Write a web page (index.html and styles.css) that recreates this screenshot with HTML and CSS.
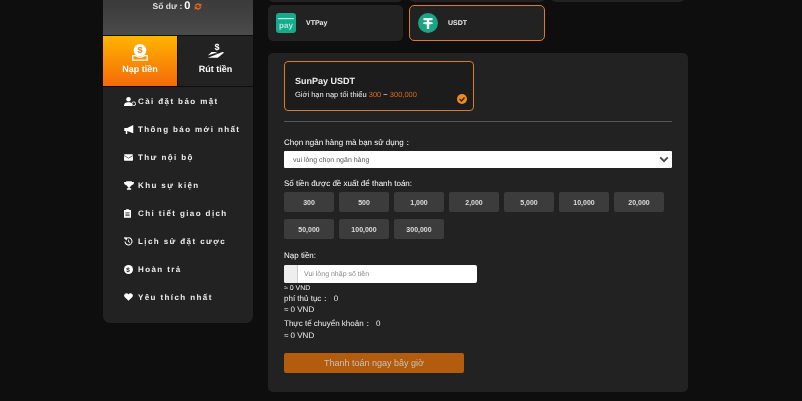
FILE: index.html
```html
<!DOCTYPE html>
<html lang="vi">
<head>
    <meta charset="UTF-8">
    <meta name="viewport" content="width=device-width, initial-scale=1.0">
    <title>Nạp tiền</title>
    <link rel="stylesheet" href="styles.css">
</head>
<body>
    <div class="page">
        <aside class="sidebar">
            <div class="balance">
                <span class="balance-label">Số dư :</span>
                <span class="balance-value">0</span>
                <svg class="refresh" viewBox="0 0 16 16" width="10" height="9"><path d="M2 7a6 6 0 0 1 10-3l2-2v6H8l2-2a3.500 3.500 0 0 0-5.500 1zM14 9a6 6 0 0 1-10 3l-2 2V8h6l-2 2a3.500 3.500 0 0 0 5.500-1z" fill="#d9691c"/></svg>
            </div>
            <div class="tabs">
                <div class="tab tab-active">
                    <svg viewBox="0 0 20 20" width="18" height="18"><circle cx="10" cy="8" r="7" fill="#fff"/><text x="10" y="11.500" class="coin-sign" fill="#f28a08">$</text><path d="M2 14h3a8 8 0 0 0 10 0h3v5H2z" fill="none" stroke="#fff" stroke-width="1.400"/></svg>
                    <span>Nạp tiền</span>
                </div>
                <div class="tab">
                    <svg viewBox="0 0 20 20" width="18" height="18"><text x="11" y="8" class="coin-sign" fill="#fff">$</text><path d="M1 14l4-4h4l3 1.500h-3.500M11 12.500l6-2.500 2 .5-7 6H1z" fill="#fff"/></svg>
                    <span>Rút tiền</span>
                </div>
            </div>
            <ul class="menu">
                <li><svg viewBox="0 0 16 12" width="12" height="9"><circle cx="6" cy="3" r="3" fill="#fff"/><path d="M0 12c0-4 2-5 6-5s5 1 5 5z" fill="#fff"/><circle cx="13" cy="9" r="2.500" fill="none" stroke="#fff" stroke-width="1.200"/></svg><span>Cài đặt bảo mật</span></li>
                <li><svg viewBox="0 0 14 12" width="11" height="9"><path d="M0 4h4l8-4v11L4 8v4H2V8H0z" fill="#fff"/></svg><span>Thông báo mới nhất</span></li>
                <li><svg viewBox="0 0 14 10" width="9" height="7"><rect width="14" height="10" rx="1" fill="#fff"/><path d="M0 2l7 4 7-4" fill="none" stroke="#222" stroke-width="1"/></svg><span>Thư nội bộ</span></li>
                <li><svg viewBox="0 0 14 12" width="10" height="9"><path d="M3 0h8v1h3c0 3-1 4-3.500 4.500C10 7 8.500 7.500 8 8v2h2v2H4v-2h2V8c-.5-.5-2-1-2.500-2.500C1 5 0 4 0 1h3z" fill="#fff"/></svg><span>Khu sự kiện</span></li>
                <li><svg viewBox="0 0 10 12" width="7" height="9"><path d="M0 1h3V0h4v1h3v11H0z" fill="#fff"/><path d="M2 5h6M2 7h6M2 9h6" stroke="#222"/></svg><span>Chi tiết giao dịch</span></li>
                <li><svg viewBox="0 0 14 14" width="9" height="9"><path d="M3 3a5.500 5.500 0 1 1-1.500 4" fill="none" stroke="#fff" stroke-width="1.600"/><path d="M0 1l4 0 0 4zM7 4v3.500l2 1.500" fill="#fff" stroke="#fff"/></svg><span>Lịch sử đặt cược</span></li>
                <li><svg viewBox="0 0 14 14" width="9" height="9"><circle cx="7" cy="7" r="7" fill="#fff"/><text x="7" y="10.500" class="coin-sign" fill="#222">$</text></svg><span>Hoàn trả</span></li>
                <li><svg viewBox="0 0 14 12" width="9" height="8"><path d="M7 12L1 6C-1 3 1 0 4 0c1.500 0 2.500 1 3 2 .5-1 1.500-2 3-2 3 0 5 3 3 6z" fill="#fff"/></svg><span>Yêu thích nhất</span></li>
            </ul>
        </aside>

        <main class="content">
            <div class="methods">
                <div class="method"></div>
                <div class="method"></div>
                <div class="method"></div>
                <div class="method">
                    <svg class="method-logo" viewBox="0 0 20 20" width="20" height="20"><rect width="20" height="20" rx="3" fill="#14ab8a"/><rect x="2" y="5" width="16" height="1.200" fill="#bfeee3"/><text x="10" y="14.500" class="logo-text" fill="#a9e8d9">pay</text></svg>
                    <span>VTPay</span>
                </div>
                <div class="method method-active">
                    <svg class="method-logo" viewBox="0 0 20 20" width="20" height="20"><circle cx="10" cy="10" r="10" fill="#1aa583"/><path d="M5.500 5h9v2.200h-3.300v1.900c1.900.1 3.800.5 3.800 1.100s-1.900 1-3.800 1.100V16H8.800v-4.700C6.900 11.200 5 10.800 5 10.200s1.900-1 3.800-1.100V7.200H5.500z" fill="#fff"/></svg>
                    <span>USDT</span>
                </div>
            </div>

            <section class="panel">
                <div class="channel">
                    <div class="channel-name">SunPay USDT</div>
                    <div class="channel-limit">Giới hạn nạp tối thiểu <em>300</em> ~ <em>300,000</em></div>
                    <svg class="channel-check" viewBox="0 0 10 10" width="10" height="10"><circle cx="5" cy="5" r="5" fill="#f08a1d"/><path d="M2.500 5l2 2 3-3.500" fill="none" stroke="#222" stroke-width="1.200"/></svg>
                </div>
                <hr class="divider">

                <label class="field-label label-bank">Chọn ngân hàng mà bạn sử dụng：</label>
                <div class="select">
                    <span class="select-text">vui lòng chọn ngân hàng</span>
                    <svg viewBox="0 0 12 8" width="10" height="7"><path d="M1.500 1.500L6 6l4.500-4.500" fill="none" stroke="#444" stroke-width="2.200"/></svg>
                </div>

                <label class="field-label label-amounts">Số tiền được đề xuất để thanh toán:</label>
                <div class="amounts">
                    <button class="amount">300</button>
                    <button class="amount">500</button>
                    <button class="amount">1,000</button>
                    <button class="amount">2,000</button>
                    <button class="amount">5,000</button>
                    <button class="amount">10,000</button>
                    <button class="amount">20,000</button>
                    <button class="amount">50,000</button>
                    <button class="amount">100,000</button>
                    <button class="amount">300,000</button>
                </div>

                <label class="field-label label-deposit">Nạp tiền:</label>
                <div class="input-group">
                    <span class="input-addon"></span>
                    <span class="input-text">Vui lòng nhập số tiền</span>
                </div>

                <div class="summary">
                    <div class="note-first">≈ 0 VND</div>
                    <div class="line-fee">phí thủ tục：&nbsp; 0</div>
                    <div class="line-vnd">≈ 0 VND</div>
                    <div class="line-real">Thực tế chuyển khoản：&nbsp; 0</div>
                    <div class="line-vnd line-last">≈ 0 VND</div>
                </div>

                <button class="pay">Thanh toán ngay bây giờ</button>
            </section>
        </main>
    </div>
</body>
</html>
```
FILE: styles.css
```css
html, body {
    margin: 0;
    height: 401px;
    overflow: hidden;
    background-color: #0e0e0e;
    font-family: "Liberation Sans", Arial, sans-serif;
    color: #fff;
    text-rendering: geometricPrecision;
}
.page {
    display: flex;
    align-items: flex-start;
    gap: 15px;
    padding-left: 103px;
    will-change: transform;
}
.sidebar {
    width: 150px;
    flex-shrink: 0;
}
.balance {
    height: 35px;
    background: linear-gradient(#3a3a3a, #4b4b4b);
    display: flex;
    justify-content: center;
    align-items: flex-start;
    gap: 2px;
    font-size: 8.5px;
    font-weight: bold;
    color: #ddd;
    line-height: 10px;
}
.balance-label {
    margin-top: 1px;
}
.balance-value {
    font-size: 11px;
    margin-top: 1px;
    color: #fff;
}
.refresh {
    margin-top: 2px;
    margin-left: 1px;
}
.tabs {
    display: flex;
    gap: 1px;
    margin-top: 1px;
    height: 50px;
}
.tab {
    flex: 1;
    background-color: #222;
    display: flex;
    flex-direction: column;
    align-items: center;
    padding-top: 7px;
    box-sizing: border-box;
    font-size: 9px;
    font-weight: bold;
    line-height: 12px;
    gap: 2px;
}
.tab-active {
    flex: none;
    width: 74px;
    background: linear-gradient(#ffb400, #f56a0a);
}
.coin-sign {
    font-family: "Liberation Sans", Arial, sans-serif;
    font-size: 10px;
    font-weight: bold;
    text-anchor: middle;
}
.logo-text {
    font-family: "Liberation Sans", Arial, sans-serif;
    font-size: 8px;
    text-anchor: middle;
}
.menu {
    list-style: none;
    margin: 1px 0 0;
    padding: 0 0 12px 21px;
    background-color: #222;
    border-radius: 0 0 7px 7px;
}
.menu li {
    height: 28px;
    display: grid;
    grid-template-columns: 14px 1fr;
    align-items: center;
    font-size: 8px;
    font-weight: bold;
    letter-spacing: 1.4px;
    color: #eee;
}
.content {
    width: 420px;
}
.methods {
    display: grid;
    grid-template-columns: 135px 136px 134px;
    gap: 3px 6px;
    margin-top: -34px;
}
.method {
    height: 36px;
    box-sizing: border-box;
    background-color: #222;
    border-radius: 5px;
    display: flex;
    align-items: center;
    padding-left: 8px;
    gap: 10px;
    font-size: 7px;
    font-weight: bold;
    color: #eee;
}
.method-active {
    border: 1px solid #dc7a2d;
}
.panel {
    margin-top: 12px;
    height: 339px;
    box-sizing: border-box;
    padding: 8px 16px 0;
    background-color: #222;
    border-radius: 5px;
}
.channel {
    position: relative;
    width: 190px;
    height: 50px;
    box-sizing: border-box;
    border: 1px solid #dc7a2d;
    border-radius: 4px;
    background-color: #1c1c1c;
    padding: 13px 0 0 10px;
}
.channel-name {
    font-size: 9px;
    font-weight: bold;
    line-height: 12px;
    color: #eee;
}
.channel-limit {
    font-size: 7.5px;
    line-height: 10px;
    margin-top: 3px;
    color: #eee;
}
.channel-limit em {
    font-style: normal;
    color: #d9691c;
}
.channel-check {
    position: absolute;
    right: 6px;
    bottom: 6px;
}
.divider {
    border: 0;
    height: 1px;
    margin: 10px 0 0;
    background-color: #555;
}
.field-label {
    display: block;
    font-size: 8px;
    line-height: 10px;
    color: #fff;
}
.label-bank {
    margin-top: 16px;
}
.select {
    margin-top: 3px;
    height: 17px;
    background-color: #fff;
    border-radius: 1px;
    display: flex;
    align-items: center;
    justify-content: space-between;
    padding: 0 3px 0 9px;
    font-size: 7px;
    color: #555;
}
.select-text {
    padding-top: 1px;
}
.label-amounts {
    margin-top: 11px;
}
.amounts {
    display: flex;
    flex-wrap: wrap;
    gap: 7px 5px;
    margin-top: 3px;
}
.amount {
    width: 50px;
    height: 20px;
    padding: 0;
    border: 0;
    border-radius: 2px;
    background-color: #3c3c3c;
    font-family: inherit;
    font-size: 7px;
    font-weight: bold;
    color: #ddd;
}
.label-deposit {
    margin-top: 12px;
}
.input-group {
    margin-top: 4px;
    width: 193px;
    height: 18px;
    display: flex;
    background-color: #fff;
    border-radius: 2px;
    font-size: 7px;
    color: #888;
}
.input-addon {
    width: 13px;
    background-color: #eee;
    border-right: 1px solid #ccc;
    border-radius: 2px 0 0 2px;
}
.input-text {
    padding-left: 6px;
    line-height: 19px;
}
.summary {
    font-size: 8px;
    color: #eee;
}
.note-first {
    font-size: 7px;
    line-height: 9px;
    margin-top: 1px;
}
.line-fee, .line-real, .line-vnd {
    line-height: 11px;
}
.line-real {
    margin-top: 3px;
}
.line-fee + .line-vnd {
    margin-bottom: 2px;
}
.line-last {
    margin-top: 1px;
}
.pay {
    display: block;
    margin-top: 12px;
    width: 180px;
    height: 20px;
    padding: 0;
    border: 0;
    border-radius: 2px;
    background-color: #b45c0e;
    font-family: inherit;
    font-size: 9px;
    color: #c9c0b6;
}
```
